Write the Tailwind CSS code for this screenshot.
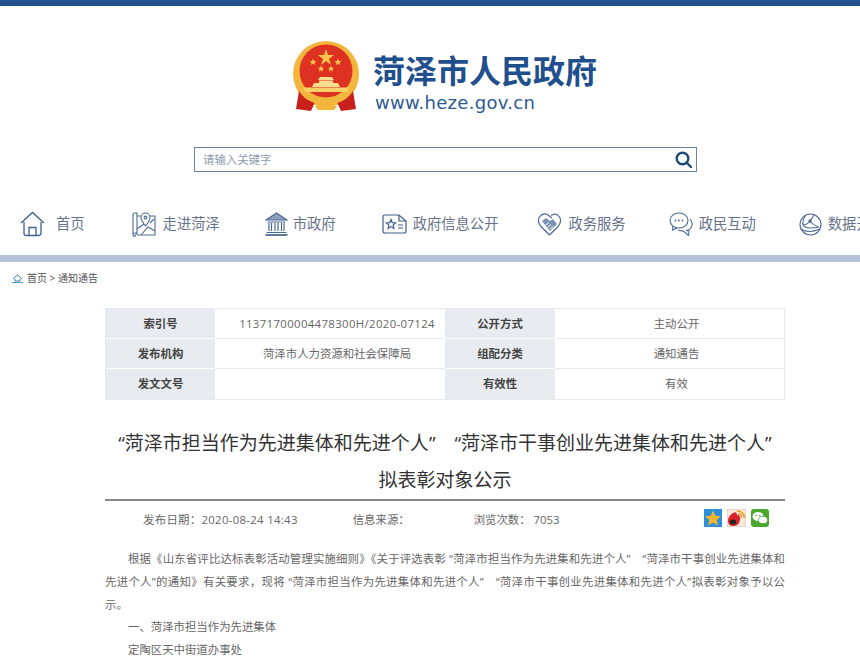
<!DOCTYPE html>
<html lang="zh-CN">
<head>
    <meta charset="UTF-8">
    <title>菏泽市人民政府</title>
    <script src="https://cdn.jsdelivr.net/npm/@tailwindcss/browser@4"></script>
</head>
<body class="bg-white overflow-hidden font-['Open_Sans','Noto_Sans_CJK_SC',sans-serif] text-[#666]">
    <div class="h-[6px] bg-[#22538f]"></div>

    <!-- logo -->
    <header class="flex items-start pl-[293px] pt-[35px] h-[141px]">
        <svg class="w-[66px] h-[71px]" viewBox="0 0 66 71">
            <circle cx="33" cy="33" r="33" fill="#f2b63c"/>
            <circle cx="33" cy="30" r="26.5" fill="#dd3222"/>
            <polygon points="33,8 35,14 41,14 36,18 38,24 33,20 28,24 30,18 25,14 31,14" fill="#f7c64a"/>
            <polygon points="20,17.5 21,20 23.5,20 21.5,21.7 22.2,24 20,22.7 17.8,24 18.5,21.7 16.5,20 19,20" fill="#f7c64a"/>
            <polygon points="45,17.5 46,20 48.5,20 46.5,21.7 47.2,24 45,22.7 42.8,24 43.5,21.7 41.5,20 44,20" fill="#f7c64a"/>
            <polygon points="28,24.5 29,26.7 31,26.7 29.5,28.2 30,30.5 28,29.2 26,30.5 26.5,28.2 25,26.7 27,26.7" fill="#f7c64a"/>
            <polygon points="38,24.5 39,26.7 41,26.7 39.5,28.2 40,30.5 38,29.2 36,30.5 36.5,28.2 35,26.7 37,26.7" fill="#f7c64a"/>
            <path d="M27 36 H39 L41 39 H25Z M26 39.5 H40 V42 H26Z M21 42 H45 L47 46 H19Z" fill="#f9dc8e"/>
            <path d="M10 46.5 H56 L54 51 H12Z" fill="#f8d268"/>
            <path d="M6 50 Q12 60 22 61 L18 70 L3 68Z M60 50 Q54 60 44 61 L48 70 L63 68Z" fill="#c9201c"/>
            <path d="M14 52 Q22 60 33 60 Q44 60 52 52 L55 56 Q45 64 33 64 Q21 64 11 56Z" fill="#f2b63c"/>
            <path d="M22 59 Q27 53 33 58 Q39 53 44 59 L41 63 H25Z" fill="#f2b63c"/>
            <path d="M22 65 H44 L41 69 H25Z" fill="#f2b63c"/>
        </svg>
        <div class="ml-[15px]">
            <div class="text-[32px] leading-[38px] mt-[11px] -ml-[1px] font-bold text-[#1f4f8d]">菏泽市人民政府</div>
            <div class="ml-[1px] mt-[3px] text-[18px] leading-[20px] tracking-[0.3px] text-[#2c5a93] font-['DejaVu_Sans',sans-serif]">www.heze.gov.cn</div>
        </div>
    </header>

    <!-- search -->
    <div class="ml-[194px] w-[503px] h-[25px] border border-[#6d83a0] flex items-center justify-between pl-[8px] pr-[4px]">
        <span class="text-[11.4px] text-[#8d9bb0]">请输入关键字</span>
        <svg class="w-[17px] h-[17px]" viewBox="0 0 17 17" fill="none" stroke="#1d4a78" stroke-width="2.4">
            <circle cx="7.5" cy="7.5" r="5.8"/>
            <path d="M11.5 11.5 L16 16" stroke-linecap="round"/>
        </svg>
    </div>

    <!-- nav -->
    <nav class="mt-[39px] h-[44px] pl-[20px] flex items-start whitespace-nowrap text-[14.3px] leading-[26px] text-[#66748a]">
        <div class="flex items-center">
            <svg class="w-[25px] h-[26px]" viewBox="0 0 25 26" fill="none" stroke="#3f5f8c" stroke-width="1.3">
                <path d="M1 12 L12.5 1.5 L24 12"/>
                <path d="M4 11 V22 Q4 24.5 6.5 24.5 H18.5 Q21 24.5 21 22 V11"/>
                <path d="M9 24.5 V16.5 H16 V24.5"/>
            </svg>
            <span class="ml-[11px]">首页</span>
        </div>
        <div class="flex items-center ml-[47px]">
            <svg class="w-[24px] h-[25px]" viewBox="0 0 24 25" fill="none" stroke="#4d6a94" stroke-width="1.1">
                <path d="M1 3 Q1 1 3 1 H5 V21 H3 Q1 21 1 23 Z"/>
                <path d="M1 23 Q2 25 3 24 L5 21"/>
                <path d="M9 4 H5 M18 4 H23 V23 H5"/>
                <path d="M13.5 14 Q9 8.5 9 5.5 A4.5 4.5 0 0 1 18 5.5 Q18 8.5 13.5 14Z"/>
                <circle cx="13.5" cy="5.5" r="1.4"/>
                <path d="M5 17 L12 12 M9 23 L16 15 L23 19 M18 11 L22 7"/>
            </svg>
            <span class="ml-[7px]">走进菏泽</span>
        </div>
        <div class="flex items-center ml-[45px]">
            <svg class="w-[23px] h-[24px]" viewBox="0 0 23 24" fill="none" stroke="#4d6a94" stroke-width="1.2">
                <path d="M1 8 L11.5 1 L22 8 Z" fill="#8ca0bd"/>
                <path d="M2.5 10 H20.5 M1.5 20.5 H21.5"/>
                <path d="M0.5 23 H22.5" stroke-width="1.8"/>
                <path d="M4 11 V19 M6.5 11 V19 M10 11 V19 M13 11 V19 M16.5 11 V19 M19 11 V19"/>
            </svg>
            <span class="ml-[5px]">市政府</span>
        </div>
        <div class="flex items-center ml-[46px]">
            <svg class="w-[25px] h-[20px]" viewBox="0 0 25 20" fill="none" stroke="#3f5f8c" stroke-width="1.2">
                <path d="M3 1 H17 L24 7 V17 Q24 19 22 19 H3 Q1 19 1 17 V3 Q1 1 3 1Z"/>
                <path d="M17 1 V7 H24"/>
                <polygon points="9,5.5 10.3,8.7 13.6,9 11.1,11.1 11.9,14.4 9,12.6 6.1,14.4 6.9,11.1 4.4,9 7.7,8.7"/>
                <path d="M16 11 H21 M16 14 H21"/>
            </svg>
            <span class="ml-[6px]">政府信息公开</span>
        </div>
        <div class="flex items-center ml-[40px]">
            <svg class="w-[23px] h-[23px]" viewBox="0 0 23 23" fill="none" stroke="#4d6a94" stroke-width="1.2">
                <path d="M11.5 22 L2.5 13 Q-1 8 1.5 4 Q5 -1 10 2 L14 5 M13 2.5 Q18 -1 21.5 4 Q24 8 20.5 13 L11.5 22"/>
                <path d="M4 8 L8 5 L12 8 L15 6 L19 11 L12 18 Z" fill="#7b92b3" stroke="none"/>
                <path d="M8 12 L11 9.5 M10 14 L13 11.5 M12 16 L15 13.5" stroke="#fff" stroke-width="1"/>
            </svg>
            <span class="ml-[7px]">政务服务</span>
        </div>
        <div class="flex items-center ml-[43px]">
            <svg class="w-[24px] h-[24px]" viewBox="0 0 24 24" fill="none" stroke="#4d6a94" stroke-width="1.1">
                <ellipse cx="10" cy="8.5" rx="9" ry="7.5"/>
                <path d="M4 14 L3.5 18 L8 16"/>
                <path d="M21 7 Q23.5 10 23 13.5 Q22 18 17 18.5 L20 19 L19.5 23.5 L15 19.5 L9 18"/>
                <circle cx="6.5" cy="8.5" r="0.9" fill="#4d6a94" stroke="none"/>
                <circle cx="10" cy="8.5" r="0.9" fill="#4d6a94" stroke="none"/>
                <circle cx="13.5" cy="8.5" r="0.9" fill="#4d6a94" stroke="none"/>
            </svg>
            <span class="ml-[6px]">政民互动</span>
        </div>
        <div class="flex items-center ml-[43px]">
            <svg class="w-[23px] h-[23px]" viewBox="0 0 23 23" fill="none" stroke="#4d6a94" stroke-width="1.1">
                <circle cx="11.5" cy="11.5" r="10.5"/>
                <path d="M7 2 Q3 7 4 12 Q8 12 11 8 Q14 4 15 2 M11 8 Q14 12 20 14 M4 12 Q6 15 11 15 Q16 15 20 14 M2 16 Q9 21 21 16"/>
                <circle cx="11" cy="8" r="1.1" fill="#4d6a94"/>
            </svg>
            <span class="ml-[6px]">数据开放</span>
        </div>
    </nav>

    <div class="h-[7px] bg-[#b6c2d7]"></div>

    <!-- breadcrumb -->
    <div class="flex items-center pl-[12px] mt-[9px] h-[14px] text-[10px] text-[#555]">
        <svg class="w-[11px] h-[9px]" viewBox="0 0 11 9" fill="none" stroke="#3d78a8" stroke-width="1">
            <path d="M1 5 L5.5 1 L10 5 M3 5 V7 H8 V5"/>
            <path d="M0 8.5 H11" stroke="#4a9bd0"/>
        </svg>
        <span class="ml-[4px]">首页 &gt; 通知通告</span>
    </div>

    <main class="mx-[105px] w-[680px]">
        <!-- info table -->
        <div class="mt-[23px] grid grid-cols-[109px_230px_110px_229px] auto-rows-[30px] border border-[#e6e8ec] text-[11.4px] text-center items-stretch">
            <div class="bg-[#e8ebef] font-bold text-[#444] flex items-center justify-center border-b border-white">索引号</div>
            <div class="flex items-center justify-center border-b border-[#e6e8ec] whitespace-nowrap pl-[14px] tracking-[0.35px]">11371700004478300H/2020-07124</div>
            <div class="bg-[#e8ebef] font-bold text-[#444] flex items-center justify-center border-b border-white">公开方式</div>
            <div class="flex items-center justify-center border-b border-[#e6e8ec] pl-[14px]">主动公开</div>
            <div class="bg-[#e8ebef] font-bold text-[#444] flex items-center justify-center border-b border-white">发布机构</div>
            <div class="flex items-center justify-center border-b border-[#e6e8ec] pl-[14px]">菏泽市人力资源和社会保障局</div>
            <div class="bg-[#e8ebef] font-bold text-[#444] flex items-center justify-center border-b border-white">组配分类</div>
            <div class="flex items-center justify-center border-b border-[#e6e8ec] pl-[14px]">通知通告</div>
            <div class="bg-[#e8ebef] font-bold text-[#444] flex items-center justify-center">发文文号</div>
            <div></div>
            <div class="bg-[#e8ebef] font-bold text-[#444] flex items-center justify-center">有效性</div>
            <div class="flex items-center justify-center pl-[14px]">有效</div>
        </div>

        <!-- title -->
        <h1 class="mt-[25px] text-[19px] leading-[37px] text-center text-[#333] font-normal whitespace-nowrap">“菏泽市担当作为先进集体和先进个人”　“菏泽市干事创业先进集体和先进个人”<br>拟表彰对象公示</h1>
        <div class="h-[2px] bg-[#8a8a8a]"></div>

        <!-- meta row -->
        <div class="relative h-[38px] flex items-center text-[11.4px] whitespace-nowrap">
            <span class="ml-[38px] tracking-[0.3px]">发布日期：2020-08-24 14:43</span>
            <span class="ml-[55px]">信息来源：</span>
            <span class="ml-[64px]">浏览次数： 7053</span>
            <div class="flex items-center absolute left-[599px] top-[8px]">
                <svg class="w-[18px] h-[18px]" viewBox="0 0 18 18">
                    <rect width="18" height="18" fill="#2f8fd8"/>
                    <polygon points="9,1.5 11.3,6.7 17,7.3 12.7,11 14,16.5 9,13.6 4,16.5 5.3,11 1,7.3 6.7,6.7" fill="#f2b52c"/>
                </svg>
                <svg class="ml-[5px] w-[19px] h-[18px]" viewBox="0 0 19 18">
                    <rect width="19" height="18" fill="#f8ead8" stroke="#c99" stroke-width="0.5"/>
                    <path d="M1 12 Q1 7 6 4 Q10 2 10 6 Q14 6 13 11 Q12 17 6 17 Q1 17 1 12Z" fill="#d8232a"/>
                    <ellipse cx="6" cy="13" rx="3.2" ry="2.5" fill="#222"/>
                    <path d="M10 2 Q17 2 17.5 9" fill="none" stroke="#ef9a2a" stroke-width="1.6"/>
                    <path d="M11 5 Q14.5 5 15 8.5" fill="none" stroke="#ef9a2a" stroke-width="1.4"/>
                </svg>
                <svg class="ml-[5px] w-[18px] h-[18px]" viewBox="0 0 18 18">
                    <rect width="18" height="18" rx="3" fill="#4ba62e"/>
                    <ellipse cx="7" cy="7.5" rx="5.5" ry="4.5" fill="#fff"/>
                    <ellipse cx="12" cy="11" rx="4.5" ry="3.6" fill="#fff" stroke="#4ba62e" stroke-width="0.7"/>
                    <circle cx="5.2" cy="6.5" r="0.8" fill="#4ba62e"/>
                    <circle cx="8.8" cy="6.5" r="0.8" fill="#4ba62e"/>
                </svg>
            </div>
        </div>

        <!-- body -->
        <article class="mt-[9px] text-[11.4px] leading-[22.8px] text-[#666]">
            <p class="indent-[23px] text-justify">根据《山东省评比达标表彰活动管理实施细则》《关于评选表彰 “菏泽市担当作为先进集和先进个人”　“菏泽市干事创业先进集体和先进个人”的通知》有关要求，现将 “菏泽市担当作为先进集体和先进个人”　“菏泽市干事创业先进集体和先进个人”拟表彰对象予以公示。</p>
            <p class="indent-[23px]">一、菏泽市担当作为先进集体</p>
            <p class="indent-[23px]">定陶区天中街道办事处</p>
        </article>
    </main>
</body>
</html>
